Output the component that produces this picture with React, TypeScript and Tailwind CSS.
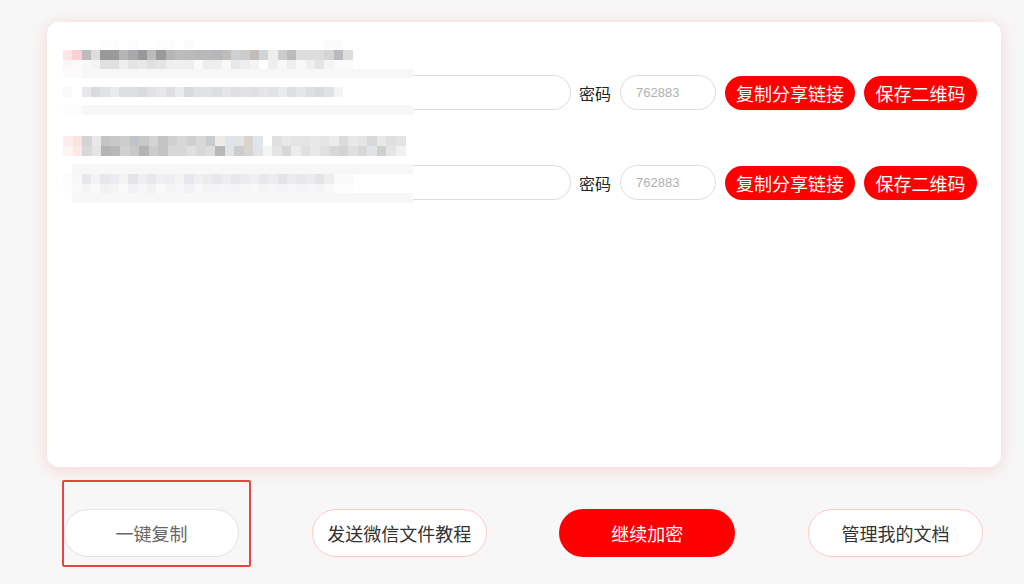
import React from "react";

type PixRow = { y: number; h: number; x: number; bw: number; colors: string[] };
type Band = { y: number; h: number; x: number; w: number; color: string };

const row1Rows: PixRow[] = [
  {
    y: 10, h: 9.5, x: 0, bw: 9.33,
    colors: ['#fde6e8','#fdd0d4','#bbbbbb','#dddddd','#999999','#9a9a9a','#b5b5b5','#a8a8ac','#999999','#bbbbbb','#9a9a9a','#b5b5b5','#bbbbbb','#bbbbbb','#b8b8b8','#bcb8b8','#b4b8bc','#c0bcbc','#cdd0d4','#cccccc','#c4bcb8','#cfd4d8','#eeeeee','#cccccc','#bbbbbb','#dddddd','#dddddd','#dddddd','#d8d4d4','#b8bcc0','#dddddd'],
  },
  {
    y: 19.5, h: 9, x: 0, bw: 9.33,
    colors: ['#fdf6f6','#fbfbfb','#f8f8f8','#f4f4f4','#e0e0e0','#e0e0e0','#eeeeee','#e4e4e4','#e8e8e8','#e0e0e0','#e4e4e4','#eeeeee','#f0f0f0','#eeeeee','#fafafa','#eeeeee','#eeeeee','#f8f8f8','#e8e8e8','#eeeeee','#f4f4f4','#ffffff','#eeeeee','#f8f8f8','#eeeeee','#f8f8f8','#eeeeee','#e4e4e4','#f4f4f4','#fafafa','#fafafa'],
  },
  {
    y: 47, h: 9.5, x: 0, bw: 9.33,
    colors: ['#fafafa','#ffffff','#e8e8ec','#d8dade','#e0e2e6','#e8eaee','#dcdee2','#dcdee2','#d8dade','#e0e2e6','#e8e8ec','#dcdee2','#e8eaee','#d8dade','#e0e2e6','#e0e2e6','#dcdee2','#e4e6ea','#e0e0e4','#e0e2e6','#e0e0e4','#e4e6ea','#e0e2e6','#e8eaee','#dcdee2','#e4e6ea','#dcdee2','#d8dade','#e0e2e6','#f4f4f4','#ffffff'],
  },
  {
    y: 0, h: 9, x: 0, bw: 9.33,
    colors: ['#ffffff','#ffffff','#ffffff','#ffffff','#fcfcfc','#fcfcfc','#ffffff','#fcfcfc','#ffffff','#ffffff','#fcfcfc','#fcfcfc','#ffffff','#fbfbfb','#ffffff','#ffffff','#ffffff','#ffffff','#ffffff','#ffffff','#ffffff','#ffffff','#ffffff','#ffffff','#ffffff','#ffffff','#ffffff','#ffffff','#fbfbfb','#fbfbfb','#ffffff'],
  },
];
const row1Bands: Band[] = [
  { y: 28.5, h: 9, x: 0, w: 19, color: '#fbfbfb' },
  { y: 28.5, h: 9, x: 19, w: 331, color: '#f7f7f7' },
  { y: 65, h: 9.5, x: 19, w: 331, color: '#f7f7f7' },
  { y: 65, h: 9.5, x: 0, w: 19, color: '#fcfcfc' },
];

const row2Rows: PixRow[] = [
  {
    y: 6, h: 10, x: 0, bw: 9.5,
    colors: ['#fdeced','#fde0e0','#d4d4d4','#e8e8e8','#c4c4c4','#c8c8c8','#cccccc','#c0c4c8','#c8c8c8','#d4d4d4','#c4c4c4','#d0d0d0','#d8d8d8','#ccd0d0','#d8d8d8','#c8ccd0','#ecebe8','#e0e4e8','#e4e4e4','#d8d4d0','#e0e4ec','#ffffff','#e0e0e0','#e8e8e8','#e4e4e4','#e4e4e4','#e8e8e8','#e4e4e4','#eaeeea','#dcdcdc','#e8e8e8','#e4e4e4','#d8d8d8','#e8e8e8','#e0e0e0','#e4e4e4'],
  },
  {
    y: 16, h: 9.5, x: 0, bw: 9.5,
    colors: ['#fdf4f4','#fde8e8','#d8d8d8','#e4e4e4','#b4b4b4','#b8b8b8','#d0d0d0','#c8c8c8','#b4b4b4','#cccccc','#c4c4c4','#d8d8d8','#d8d8d8','#e0e0e0','#d8d8d8','#dddddd','#b8b8b8','#e0e4e8','#cccccc','#d8d4d0','#e0e4e8','#f4f4f4','#e4e4e4','#d8d8d8','#ececec','#e0e0e0','#e8e8e8','#e0e0e0','#d8d8d8','#d4d4d4','#e0e0e0','#d8d8d8','#e0e4e8','#d0d0d0','#e4e4e4','#f0f0f0'],
  },
  {
    y: 44, h: 9.5, x: 0, bw: 9.33,
    colors: ['#fcfcfc','#f8f8f8','#e8e8ec','#f4f4f4','#e8e8ec','#ececf0','#f4f4f4','#e4e4e8','#eeeeee','#e8e8ec','#f0f0f4','#eeeef2','#f4f4f4','#e8e8ec','#f0f0f0','#ececf0','#e8e8ec','#eeeef2','#e8e8ec','#ececf0','#f0f0f4','#e8e8ec','#ececf0','#e4e4e8','#ececf0','#e8e8ec','#ececf0','#e4e4e8','#eeeeee','#fafafa','#fafafa'],
  },
  {
    y: 53.5, h: 9, x: 0, bw: 9.33,
    colors: ['#fdfdfd','#fafafa','#f4f4f6','#fafafa','#f2f2f4','#f4f4f6','#fafafa','#f2f2f4','#f6f6f8','#f2f2f4','#fafafa','#f4f4f6','#f6f6f8','#f2f2f4','#f8f8f8','#f4f4f6','#f4f4f6','#f6f6f8','#f4f4f6','#f6f6f8','#f8f8f8','#f4f4f6','#f6f6f8','#f4f4f6','#f6f6f8','#f4f4f6','#f6f6f8','#f4f4f6','#f8f8f8','#fcfcfc','#fcfcfc'],
  },
];
const row2Bands: Band[] = [
  { y: 34, h: 10, x: 9, w: 341, color: '#f7f7f7' },
  { y: 63, h: 9.5, x: 9, w: 341, color: '#f7f7f7' },
];

function Pixelation({ rows, bands }: { rows: PixRow[]; bands: Band[] }) {
  return (
    <svg
      className="absolute left-0 top-0"
      width="350"
      height="75"
      viewBox="0 0 350 75"
      shapeRendering="crispEdges"
    >
      <rect x="0" y="0" width="350" height="75" fill="#ffffff" />
      {bands.map((b, i) => (
        <rect key={"b" + i} x={b.x} y={b.y} width={b.w} height={b.h} fill={b.color} />
      ))}
      {rows.map((r, ri) =>
        r.colors.map((c, ci) => (
          <rect
            key={ri + "-" + ci}
            x={r.x + ci * r.bw}
            y={r.y}
            width={r.bw + 0.5}
            height={r.h}
            fill={c}
          />
        ))
      )}
    </svg>
  );
}

function ShareRow({ rows, bands }: { rows: PixRow[]; bands: Band[] }) {
  return (
    <div className="relative">
      <div className="h-[28px]" />
      <div className="mt-[7px] flex items-center">
        <div className="h-[35px] flex-1 rounded-full border border-[#dcdcdc] bg-white" />
        <span className="ml-[8px] text-[16px] leading-none text-[#222]">密码</span>
        <div className="ml-[9px] flex h-[35px] w-[96px] items-center rounded-full border border-[#dcdcdc] bg-white pl-[15px] font-['Liberation_Sans',sans-serif] text-[13px] text-[#b0b0b0]">
          762883
        </div>
        <button className="ml-[9px] flex h-[34px] w-[130px] items-center justify-center rounded-full bg-[#ff0000] text-[18px] leading-none text-white">
          复制分享链接
        </button>
        <button className="ml-[9px] flex h-[34px] w-[113px] items-center justify-center rounded-full bg-[#ff0000] text-[18px] leading-none text-white">
          保存二维码
        </button>
      </div>
      <Pixelation rows={rows} bands={bands} />
    </div>
  );
}

export default function App() {
  return (
    <div className="h-[584px] w-full overflow-hidden bg-[#f7f7f7] pl-[47px] pt-[22px] font-['Noto_Sans_CJK_SC','Noto_Sans',sans-serif]">
      <div className="h-[445px] w-[954px] rounded-[12px] bg-white pl-[16px] pr-[24px] pt-[18px] shadow-[0_3px_18px_rgba(235,80,80,0.2)]">
        <ShareRow rows={row1Rows} bands={row1Bands} />
        <div className="mt-[20px]">
          <ShareRow rows={row2Rows} bands={row2Bands} />
        </div>
      </div>

      <div className="mt-[42px] flex w-[954px] justify-between pl-[17px] pr-[18px]">
        <div className="relative">
          <button className="flex h-[48px] w-[175px] items-center justify-center rounded-full border border-[#e2e2ea] bg-white text-[18px] text-[#666]">
            一键复制
          </button>
          <div className="absolute -left-[2px] -top-[29px] h-[87px] w-[189px] rounded-[2px] border-2 border-[#e8453c]" />
        </div>
        <button className="flex h-[48px] w-[175px] items-center justify-center rounded-full border border-[#ffc9c9] bg-white text-[18px] text-[#333]">
          发送微信文件教程
        </button>
        <button className="flex h-[48px] w-[176px] items-center justify-center rounded-full bg-[#ff0000] text-[18px] text-white">
          继续加密
        </button>
        <button className="flex h-[48px] w-[175px] items-center justify-center rounded-full border border-[#ffc9c9] bg-white text-[18px] text-[#333]">
          管理我的文档
        </button>
      </div>
    </div>
  );
}
